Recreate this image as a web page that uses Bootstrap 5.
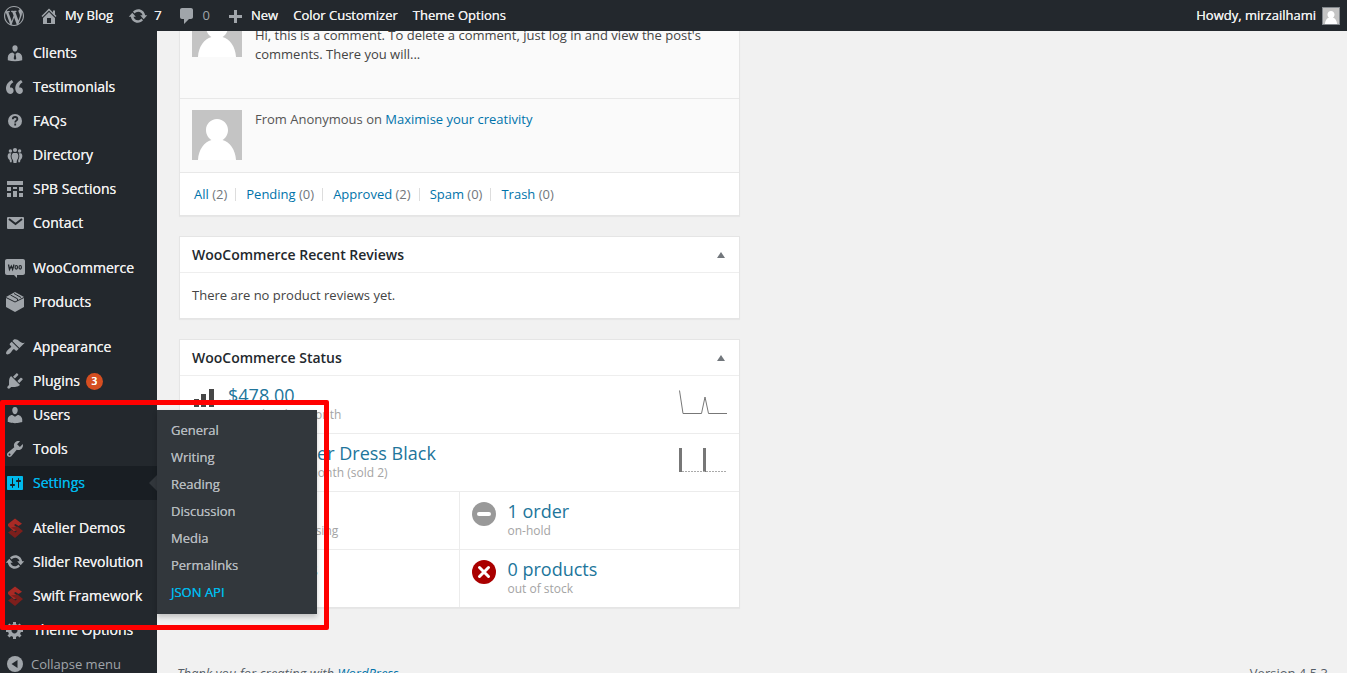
<!DOCTYPE html>
<html lang="en">
<head>
<meta charset="utf-8">
<meta name="viewport" content="width=device-width, initial-scale=1">
<title>Dashboard - My Blog</title>
<link href="https://cdn.jsdelivr.net/npm/bootstrap@5.3.0/dist/css/bootstrap.min.css" rel="stylesheet">
<style>
body{font-family:"Open Sans",sans-serif;font-size:13px;line-height:19px;color:#444;background:#f1f1f1;height:100vh;overflow:hidden}
a{color:#0073aa;text-decoration:none}
svg{display:block;flex:none;fill:currentColor}
.adminbar{height:31px;background:#23282d;padding:0 7px 0 4px;z-index:1030}
.adminbar a{color:#eee;text-shadow:0 0 0 currentColor;display:flex;align-items:center;gap:6px}
.adminbar svg{color:#a0a5aa}
.adminbar .bar-dim{color:#a0a5aa;text-shadow:none}
.adminbar .me-pic{border:1px solid #82878c}
.bar-links{gap:15px}
.sidemenu{width:157px;flex:none;background:#23282d;padding-top:36px;height:100vh;z-index:20;position:relative}
.sidemenu ul{list-style:none;margin:0;padding:0}
.side-link{display:flex;align-items:flex-start;gap:8px;height:34px;padding:7px 0 0 5px;font-size:14px;line-height:20px;color:#eee;text-shadow:0 0 0 currentColor;white-space:nowrap}
.side-link svg{color:#a0a5aa}
.gap-before{margin-top:11px}
.current{position:relative}
.current>.side-link{background:#191e23;color:#00b9eb}
.current>.side-link svg{color:#00b9eb}
.current>.side-link::after{content:"";position:absolute;right:0;top:9px;border:8px solid transparent;border-right-color:#32373c}
.count{background:#d54e21;color:#fff;font-size:10px;font-weight:600;line-height:17px;width:17px;height:17px;border-radius:50%;text-align:center;margin:2px 0 0 -2px}
.collapse-btn{background:none;border:0;color:#a0a5aa;font-size:13px;text-shadow:none;gap:6px}
.flyout{position:absolute;left:100%;top:-56px;width:160px;background:#32373c;box-shadow:0 3px 5px rgba(0,0,0,.2)}
.sidemenu .flyout{padding:7px 0 8px}
.flyout a{display:block;height:27px;line-height:27px;padding-left:14px;color:#b4b9be;text-shadow:0 0 0 currentColor}
.flyout a.on{color:#00b9eb}
.highlight{position:absolute;left:0;top:-66px;width:329px;height:230px;border:5px solid #f00;border-radius:2px;pointer-events:none}
.dash-col{padding-left:22px;padding-right:12px}
.panel{background:#fff;border:1px solid #e5e5e5;box-shadow:0 1px 1px rgba(0,0,0,.04);margin-bottom:20px}
.panel h2{font-size:14px;line-height:20px;font-weight:600;color:#23282d;margin:0}
.panel-top{height:36px;padding:0 12px;border-bottom:1px solid #eee}
.toggle{border:0;background:none;padding:0 2px 0 0;color:#72777c}
.comment-row{background:#fafafa;border-bottom:1px solid #e8e8e8;padding:11px 12px 12px;gap:13px}
.comment-row p{margin:0}
.comment-row .from{color:#555}
.first-row{padding:7px 12px 34px}
.first-row p{padding-top:19px}
.filters{height:42px;padding:0 14px;color:#72777c}
.filters li+li::before{content:"";display:inline-block;width:1px;height:13px;background:#ddd;margin:0 10px 0 8px;vertical-align:-2px}
.reviews{padding:13px 12px}
.stat{height:58px;padding:9px 12px 0;border-bottom:1px solid #ececec;color:#a4a4a4;font-size:12px;line-height:17px}
.stat strong{display:block;font-size:18px;line-height:21px;font-weight:400;color:#21759b}
.stat-text{margin-left:12px}
.stat.no-line{border-bottom:0;height:57px}
.stat.split{border-right:1px solid #ececec}
.round-icon{margin-top:1px}
.foot{color:#555d66;padding:36px 19px 0 20px}
</style>
</head>
<body>
<svg width="0" height="0" class="position-absolute" aria-hidden="true">
<symbol id="update" viewBox="0 0 20 20"><path d="M10.2 3.28c3.53 0 6.43 2.61 6.92 6h2.08l-3.5 4-3.5-4h2.32c-.45-1.97-2.21-3.45-4.32-3.45-1.45 0-2.73.71-3.54 1.78L4.95 5.66C6.23 4.2 8.11 3.28 10.2 3.28zm-.4 13.44c-3.52 0-6.43-2.61-6.92-6H.8l3.5-4c1.17 1.33 2.33 2.67 3.5 4H5.48c.45 1.97 2.21 3.45 4.32 3.45 1.45 0 2.73-.71 3.54-1.78l1.71 1.95c-1.28 1.46-3.15 2.38-5.25 2.38z"/></symbol>
<symbol id="swift" viewBox="0 0 20 20"><path fill="#a82a25" d="M10 .5l7 5.200-3.500 2.300L10.500 6 9 7l5 4-5 2.500L3 8V6z"/><path fill="#7d1f1c" d="M12.500 8.500L18 13l-8 7-7-5.500 3.500-2.500 4 2.500 1.500-1.500L6 9.500z"/></symbol>
<symbol id="avatar" viewBox="0 0 50 50"><path fill="#c4c4c4" d="M0 0h50v50H0z"/><path fill="#fff" d="M25 9c6.300 0 11 5 11 11 0 4.500-2.300 8-5.500 10C38 32 43.500 40 44 50H6c.5-10 6-18 13.500-20-3.200-2-5.500-5.500-5.500-10 0-6 4.700-11 11-11z"/></symbol>
</svg>

<header class="adminbar fixed-top d-flex justify-content-between align-items-center">
  <nav class="d-flex align-items-center bar-links">
    <a href="#" aria-label="About WordPress"><svg width="20" height="20" viewBox="0 0 20 20"><path d="M20 10c0-5.51-4.49-10-10-10C4.48 0 0 4.49 0 10c0 5.52 4.48 10 10 10 5.51 0 10-4.48 10-10zM7.78 15.37L4.37 6.220c.55-.02 1.170-.08 1.170-.08.5-.06.44-1.130-.06-1.110 0 0-1.450.11-2.370.11-.18 0-.37 0-.58-.01C4.120 2.690 6.870 1.110 10 1.110c2.330 0 4.450.87 6.050 2.340-.68-.11-1.650.39-1.650 1.580 0 .74.45 1.360.9 2.100.35.61.55 1.360.55 2.460 0 1.490-1.400 5-1.400 5l-3.030-8.370c.54-.02.82-.17.82-.17.5-.05.44-1.250-.06-1.220 0 0-1.440.12-2.380.12-.87 0-2.330-.12-2.330-.12-.5-.03-.56 1.200-.06 1.220l.92.08 1.260 3.410zM17.410 10c.24-.64.74-1.870.43-4.250.7 1.290 1.050 2.710 1.050 4.250 0 3.290-1.730 6.240-4.400 7.780.97-2.590 1.940-5.200 2.920-7.780zM6.100 18.090C3.120 16.650 1.110 13.530 1.110 10c0-1.300.23-2.480.72-3.590C3.250 10.300 4.670 14.200 6.100 18.090zm4.030-6.630l2.580 6.980c-.86.29-1.760.45-2.710.45-.79 0-1.570-.11-2.290-.33.81-2.380 1.620-4.740 2.420-7.100z"/></svg></a>
    <a href="#"><svg width="20" height="20" viewBox="0 0 20 20"><path d="M16 8.500l1.530 1.530-1.060 1.060L10 4.600l-6.470 6.490-1.060-1.060L10 2.500l4 4v-2h2v4zm-6-2.460l6 5.990V18H4v-5.970zM12 17v-5H8v5h4z"/></svg>My Blog</a>
    <a href="#"><svg width="20" height="20"><use href="#update"/></svg>7</a>
    <a href="#" class="bar-dim"><svg width="20" height="20" viewBox="0 0 20 20"><path d="M5 2h9c1.100 0 2 .9 2 2v7c0 1.100-.9 2-2 2h-2l-5 5v-5H5c-1.100 0-2-.9-2-2V4c0-1.100.9-2 2-2z"/></svg>0</a>
    <a href="#"><svg width="20" height="20" viewBox="0 0 20 20"><path d="M17 9v3h-5v5H9v-5H4V9h5V4h3v5z"/></svg>New</a>
    <a href="#">Color Customizer</a>
    <a href="#">Theme Options</a>
  </nav>
  <a href="#">Howdy, mirzailhami<svg class="me-pic" width="18" height="18"><use href="#avatar"/></svg></a>
</header>

<div class="d-flex">
<nav class="sidemenu" aria-label="Main menu">
<ul>
  <li><a class="side-link" href="#"><svg width="20" height="20" viewBox="0 0 20 20"><path d="M10 2.200c2 0 2.800 1.500 2.600 3.200C12.400 7 11.400 8.600 10 8.600S7.600 7 7.400 5.400C7.200 3.700 8 2.200 10 2.200zM7.500 9.500L9.500 11l-.8 4.500L10 17l1.300-1.500-.8-4.500 2-1.500c2.500.3 4.700 2.300 4.700 4.700v3.100c-4.500 1.300-9.900 1.300-14.400 0v-3.100c0-2.400 2.200-4.400 4.700-4.700z"/></svg>Clients</a></li>
  <li><a class="side-link" href="#"><svg width="20" height="20" viewBox="0 0 20 20"><path d="M9.490 13.220c0-.74-.2-1.380-.61-1.900-.62-.78-1.830-.88-2.530-.72-.29-1.650 1.110-3.750 2.920-4.650L7.880 4c-2.730 1.300-5.420 4.280-4.960 8.050C3.210 14.430 4.590 16 6.540 16c.85 0 1.560-.25 2.120-.75s.83-1.180.83-2.030zm8.050 0c0-.74-.2-1.380-.61-1.900-.63-.78-1.830-.88-2.530-.72-.29-1.650 1.110-3.750 2.920-4.650L15.930 4c-2.730 1.300-5.410 4.280-4.950 8.050.29 2.380 1.660 3.950 3.610 3.950.85 0 1.560-.25 2.120-.75s.83-1.180.83-2.030z" transform="translate(-2.300 -1.500) scale(1.150)"/></svg>Testimonials</a></li>
  <li><a class="side-link" href="#"><svg width="20" height="20" viewBox="0 0 20 20"><circle cx="10" cy="10" r="7"/><path d="M7.800 8.200c0-3 4.600-2.800 4.600-.2 0 1.600-2.200 1.700-2.200 3.400m0 1.200v1.800" fill="none" stroke="#23282d" stroke-width="1.800"/></svg>FAQs</a></li>
  <li><a class="side-link" href="#"><svg width="20" height="20" viewBox="0 0 20 20"><circle cx="10" cy="5" r="2.100"/><circle cx="5.400" cy="6" r="1.700"/><circle cx="14.600" cy="6" r="1.700"/><path d="M8 8h4c2 1.500 1.800 5 0 7l-.5 3h-3L8 15c-1.800-2-2-5.500 0-7zM3.800 8.300h2.500c-1 2.500-.8 4.500.5 6.700l-.1 2.200H5L4.600 15C2.300 13.500 2 9.800 3.800 8.300zM16.200 8.300h-2.500c1 2.500.8 4.500-.5 6.700l.1 2.200H15l.4-2.200c2.300-1.500 2.600-5.200.8-6.700z"/></svg>Directory</a></li>
  <li><a class="side-link" href="#"><svg width="20" height="20" viewBox="0 0 20 20"><path d="M2 2h16v4H2zM2 8h4v4H2zM8 8h4v2H8zM14 8h4v4h-4zM2 14h4v4H2zM8 12h4v6H8zM14 14h4v4h-4z"/></svg>SPB Sections</a></li>
  <li><a class="side-link" href="#"><svg width="20" height="20" viewBox="0 0 20 20"><rect x="2" y="4" width="17" height="12" rx="1"/><path d="M4 6l6.500 5L17 6" fill="none" stroke="#23282d" stroke-width="2"/></svg>Contact</a></li>
  <li class="gap-before"><a class="side-link" href="#"><svg width="20" height="20" viewBox="0 0 20 20"><path d="M2 1h16c1.100 0 2 .9 2 2v12c0 1.100-.9 2-2 2h-6v3l-3-3H2c-1.100 0-2-.9-2-2V3c0-1.100.9-2 2-2z"/><path d="M3.500 6.500l1 5L6.300 8l1.300 3.500L9 6.500" fill="none" stroke="#23282d" stroke-width="1.300"/><g fill="none" stroke="#23282d" stroke-width="1.200"><ellipse cx="11.300" cy="9.300" rx="1.200" ry="1.800"/><ellipse cx="15.200" cy="9.300" rx="1.200" ry="1.800"/></g></svg>WooCommerce</a></li>
  <li><a class="side-link" href="#"><svg width="20" height="20" viewBox="0 0 20 20"><path d="M10 0l9 5v10l-9 5-9-5V5z"/><path d="M1 5.500l9 4.500 9-4.500M5.500 3l7 3.800v2M9 1.500l7 4" fill="none" stroke="#23282d"/></svg>Products</a></li>
  <li class="gap-before"><a class="side-link" href="#"><svg width="20" height="20" viewBox="0 0 20 20"><path d="M14.480 11.060L7.410 3.990l1.500-1.500c.5-.56 2.300-.47 3.510.32 1.210.8 1.430 1.280 2.910 2.100 1.180.64 2.450 1.260 4.450.85zm-.71.71L6.700 4.700 4.930 6.470c-.39.39-.39 1.020 0 1.410l1.060 1.060c.39.39.39 1.030 0 1.420-.6.6-1.430 1.110-2.210 1.690-.35.26-.7.53-1.010.84C1.430 14.230.4 16.080 1.400 17.070c.99 1 2.840-.03 4.180-1.360.31-.31.58-.66.85-1.020.57-.78 1.080-1.610 1.690-2.210.39-.39 1.020-.39 1.410 0l1.060 1.060c.39.39 1.020.39 1.410 0z"/></svg>Appearance</a></li>
  <li><a class="side-link" href="#"><svg width="20" height="20" viewBox="0 0 20 20"><path d="M13.110 4.360L9.870 7.600 8 5.730l3.240-3.240c.35-.34 1.050-.2 1.560.32.52.51.66 1.210.31 1.550zm-8 1.770l.91-1.120 9.010 9.010-1.190.84c-.71.71-2.630 1.160-3.820 1.160H6.140L4.900 17.260c-.59.59-1.540.59-2.120 0-.59-.58-.59-1.530 0-2.120l1.240-1.240v-3.880c0-1.130.4-3.190 1.090-3.890zm7.260 3.970l3.240-3.240c.34-.35 1.040-.21 1.550.31.52.51.66 1.210.31 1.550l-3.240 3.250z"/></svg>Plugins <span class="count">3</span></a></li>
  <li><a class="side-link" href="#"><svg width="20" height="20" viewBox="0 0 20 20"><path d="M10 9.250c-2.270 0-2.730-3.440-2.730-3.440C7 4.020 7.820 2 9.970 2c2.160 0 2.980 2.020 2.710 3.810 0 0-.41 3.440-2.680 3.440zm0 2.570L12.720 10c2.390 0 4.520 2.330 4.520 4.530v2.490s-3.650 1.130-7.240 1.130c-3.650 0-7.240-1.130-7.240-1.130v-2.490c0-2.250 1.940-4.480 4.470-4.480z"/></svg>Users</a></li>
  <li><a class="side-link" href="#"><svg width="20" height="20" viewBox="0 0 20 20"><path d="M16.680 9.770c-1.340 1.340-3.300 1.670-4.950.99l-5.410 6.520c-.99.99-2.590.99-3.580 0s-.99-2.590 0-3.570l6.520-5.420c-.68-1.650-.35-3.610.99-4.950 1.280-1.280 3.120-1.620 4.720-1.060l-2.890 2.890 2.820 2.820 2.860-2.870c.53 1.580.18 3.390-1.080 4.650zM3.810 16.210c.4.390 1.040.39 1.430 0 .4-.4.4-1.040 0-1.430-.39-.4-1.030-.4-1.430 0-.39.39-.39 1.030 0 1.430z"/></svg>Tools</a></li>
  <li class="current"><a class="side-link" href="#"><svg width="20" height="20" viewBox="0 0 20 20"><path d="M18 16V4c0-.55-.45-1-1-1H3c-.55 0-1 .45-1 1v12c0 .55.45 1 1 1h14c.55 0 1-.45 1-1zM8 11h1c.55 0 1 .45 1 1s-.45 1-1 1H8v1.500c0 .28-.22.5-.5.5s-.5-.22-.5-.5V13H6c-.55 0-1-.45-1-1s.45-1 1-1h1V5.500c0-.28.22-.5.5-.5s.5.22.5.5V11zm5-2h-1c-.55 0-1-.45-1-1s.45-1 1-1h1V5.500c0-.28.22-.5.5-.5s.5.22.5.5V7h1c.55 0 1 .45 1 1s-.45 1-1 1h-1v5.500c0 .28-.22.5-.5.5s-.5-.22-.5-.5V9z"/></svg>Settings</a>
    <ul class="flyout">
      <li><a href="#">General</a></li>
      <li><a href="#">Writing</a></li>
      <li><a href="#">Reading</a></li>
      <li><a href="#">Discussion</a></li>
      <li><a href="#">Media</a></li>
      <li><a href="#">Permalinks</a></li>
      <li><a href="#" class="on">JSON API</a></li>
    </ul>
    <div class="highlight"></div>
  </li>
  <li class="gap-before"><a class="side-link" href="#"><svg width="20" height="20"><use href="#swift"/></svg>Atelier Demos</a></li>
  <li><a class="side-link" href="#"><svg width="20" height="20"><use href="#update"/></svg>Slider Revolution</a></li>
  <li><a class="side-link" href="#"><svg width="20" height="20"><use href="#swift"/></svg>Swift Framework</a></li>
  <li><a class="side-link" href="#"><svg width="20" height="20" viewBox="0 0 20 20"><path d="M18 12h-2.180c-.17.7-.44 1.350-.81 1.930l1.540 1.540-2.100 2.100-1.540-1.540c-.58.36-1.230.63-1.910.79V19H8v-2.180c-.68-.16-1.330-.43-1.910-.79l-1.540 1.540-2.120-2.120 1.540-1.540c-.36-.58-.63-1.230-.79-1.910H1V9.030h2.170c.16-.7.44-1.350.8-1.940L2.430 5.550l2.100-2.100 1.540 1.540c.58-.37 1.240-.64 1.930-.81V2h3v2.180c.68.16 1.330.43 1.910.79l1.540-1.540 2.120 2.120-1.540 1.540c.36.59.64 1.240.8 1.940H18V12zm-8.500 1.500c1.660 0 3-1.340 3-3s-1.340-3-3-3-3 1.340-3 3 1.340 3 3 3z"/></svg>Theme Options</a></li>
  <li><button type="button" class="side-link collapse-btn"><svg width="20" height="20" viewBox="0 0 20 20"><circle cx="10" cy="10" r="8"/><path fill="#23282d" d="M12.500 6v8l-6-4z"/></svg>Collapse menu</button></li>
</ul>
</nav>

<main class="flex-grow-1">
<div class="row g-0">
<div class="col-6 dash-col">
  <section class="panel border-top-0">
    <div class="comment-row first-row d-flex">
      <svg width="50" height="50"><use href="#avatar"/></svg>
      <p>Hi, this is a comment. To delete a comment, just log in and view the post's comments. There you will...</p>
    </div>
    <div class="comment-row d-flex">
      <svg width="50" height="50"><use href="#avatar"/></svg>
      <p class="from">From Anonymous on <a href="#">Maximise your creativity</a></p>
    </div>
    <ul class="filters list-unstyled d-flex align-items-center mb-0">
      <li><a href="#">All</a> (2)</li><li><a href="#">Pending</a> (0)</li><li><a href="#">Approved</a> (2)</li><li><a href="#">Spam</a> (0)</li><li><a href="#">Trash</a> (0)</li>
    </ul>
  </section>

  <section class="panel">
    <div class="panel-top d-flex align-items-center justify-content-between">
      <h2>WooCommerce Recent Reviews</h2>
      <button type="button" class="toggle" aria-label="Toggle panel"><svg width="8" height="6" viewBox="0 0 8 6"><path d="M4 0l4 6H0z"/></svg></button>
    </div>
    <p class="reviews mb-0">There are no product reviews yet.</p>
  </section>

  <section class="panel">
    <div class="panel-top d-flex align-items-center justify-content-between">
      <h2>WooCommerce Status</h2>
      <button type="button" class="toggle" aria-label="Toggle panel"><svg width="8" height="6" viewBox="0 0 8 6"><path d="M4 0l4 6H0z"/></svg></button>
    </div>
    <a href="#" class="stat d-flex">
      <svg width="24" height="24" viewBox="0 0 24 24"><path fill="#464646" d="M2 14h5v8H2zM9 9h5v13H9zM17 4h5v18h-5z"/></svg>
      <span class="stat-text flex-grow-1"><strong>$478.00</strong>net sales this month</span>
      <svg width="48" height="30" viewBox="0 0 48 30"><path d="M.5 5.500L4 28.500h18.500L26 12l3.500 16.500H48" fill="none" stroke="#777"/></svg>
    </a>
    <a href="#" class="stat d-flex">
      <svg width="24" height="24"></svg>
      <span class="stat-text flex-grow-1"><strong>Off Shoulder Dress Black</strong>top seller this month (sold 2)</span>
      <svg width="48" height="30" viewBox="0 0 48 30"><path d="M0 5h3v24H0zM24 5h3v24h-3z" fill="#777"/><path d="M3 28.500h45" stroke="#aaa" stroke-dasharray="2 1"/></svg>
    </a>
    <div class="row g-0">
      <a href="#" class="stat split col-6 d-flex"><svg width="24" height="24"></svg><span class="stat-text"><strong>0 orders</strong>awaiting processing</span></a>
      <a href="#" class="stat col-6 d-flex"><svg class="round-icon" width="24" height="24" viewBox="0 0 24 24"><circle cx="12" cy="12" r="12" fill="#999"/><rect x="5" y="10" width="14" height="4" rx="2" fill="#fff"/></svg><span class="stat-text"><strong>1 order</strong>on-hold</span></a>
      <a href="#" class="stat split no-line col-6 d-flex"><svg width="24" height="24"></svg><span class="stat-text"><strong>0 products</strong>low in stock</span></a>
      <a href="#" class="stat no-line col-6 d-flex"><svg class="round-icon" width="24" height="24" viewBox="0 0 24 24"><circle cx="12" cy="12" r="12" fill="#a00"/><path d="M7.500 7.500l9 9m0-9l-9 9" stroke="#fff" stroke-width="3" stroke-linecap="round"/></svg><span class="stat-text"><strong>0 products</strong>out of stock</span></a>
    </div>
  </section>
</div>
</div>
<footer class="foot d-flex justify-content-between"><em>Thank you for creating with <a href="#">WordPress</a>.</em><span>Version 4.5.3</span></footer>
</main>
</div>
<script src="https://cdn.jsdelivr.net/npm/bootstrap@5.3.0/dist/js/bootstrap.bundle.min.js"></script>
</body>
</html>
